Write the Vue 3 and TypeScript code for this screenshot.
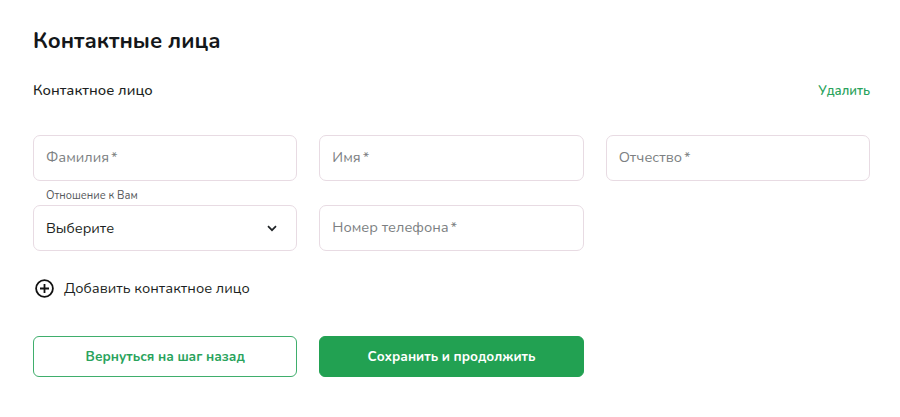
<template>
  <div class="page">
    <h1 class="title">Контактные лица</h1>

    <div class="person-head">
      <span class="person-name">Контактное лицо</span>
      <a class="remove">Удалить</a>
    </div>

    <div class="fields">
      <div class="field" v-for="f in topFields" :key="f">
        <span class="placeholder">{{ f }}<span class="star">*</span></span>
      </div>

      <div class="field select">
        <span class="float-label">Отношение к Вам</span>
        <span class="value">Выберите</span>
        <svg class="chevron" width="10" height="7" viewBox="0 0 10 7">
          <path d="M1 1.2 5 5.2l4-4" fill="none" stroke="#1f2326" stroke-width="1.7" />
        </svg>
      </div>
      <div class="field">
        <span class="placeholder">Номер телефона<span class="star">*</span></span>
      </div>
    </div>

    <div class="add-row">
      <svg width="19" height="19" viewBox="0 0 19 19">
        <circle cx="9.5" cy="9.5" r="8.4" fill="none" stroke="#111" stroke-width="1.8" />
        <path d="M9.5 5v9M5 9.5h9" stroke="#111" stroke-width="1.8" />
      </svg>
      <span>Добавить контактное лицо</span>
    </div>

    <div class="actions">
      <button class="btn outline">Вернуться на шаг назад</button>
      <button class="btn solid">Сохранить и продолжить</button>
    </div>
  </div>
</template>

<script setup lang="ts">
const topFields: string[] = ['Фамилия', 'Имя', 'Отчество']
</script>

<style scoped>
.page {
  width: 900px;
  height: 417px;
  box-sizing: border-box;
  padding: 27px 30px 0 33px;
  font-family: Nunito, "Noto Sans", sans-serif;
  color: #1c1f22;
  background: #fff;
}

.title {
  margin: 0;
  font-size: 22px;
  line-height: 28px;
  font-weight: 700;
  color: #14171a;
}

.person-head {
  display: flex;
  justify-content: space-between;
  align-items: center;
  margin-top: 25px;
  height: 20px;
}

.person-name {
  font-size: 14.8px;
  font-weight: 500;
}

.remove {
  font-size: 13px;
  font-weight: 600;
  color: #2aa35c;
  padding-top: 1px;
}

.fields {
  display: grid;
  grid-template-columns: repeat(3, 1fr);
  column-gap: 22px;
  row-gap: 24px;
  margin-top: 35px;
}

.field {
  position: relative;
  height: 46px;
  box-sizing: border-box;
  border: 1px solid #e8dbe3;
  border-radius: 7px;
  display: flex;
  align-items: center;
  padding: 0 12px;
  font-size: 14.6px;
}

.placeholder {
  color: #7c7f82;
  padding-bottom: 3px;
}

.star {
  margin-left: 2px;
}

.select {
  justify-content: space-between;
}

.value {
  padding-bottom: 1px;
}

.float-label {
  position: absolute;
  left: 12px;
  top: -18px;
  font-size: 11px;
  color: #55585b;
}

.chevron {
  margin-right: 7px;
}

.add-row {
  display: flex;
  align-items: center;
  gap: 10px;
  margin-top: 27px;
  margin-left: 2px;
  font-size: 14.6px;
}

.actions {
  display: grid;
  grid-template-columns: repeat(2, 264.33px);
  column-gap: 22px;
  margin-top: 38px;
}

.btn {
  height: 41px;
  border-radius: 6px;
  font-family: inherit;
  font-size: 13.5px;
  font-weight: 700;
  cursor: pointer;
}

.outline {
  background: #fff;
  color: #2aa35c;
  border: 1px solid #3fae6c;
}

.solid {
  background: #22a152;
  color: #fff;
  border: 1px solid #22a152;
}
</style>
